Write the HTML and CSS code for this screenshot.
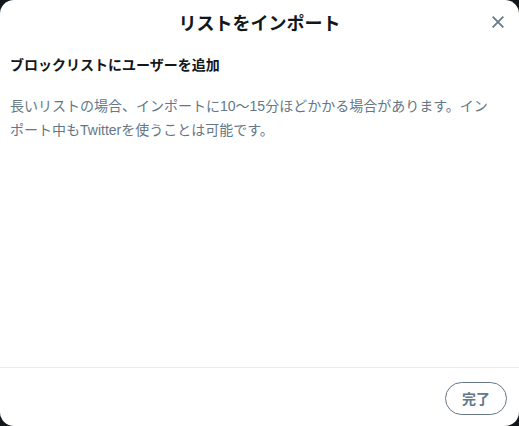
FILE: index.html
```html
<!DOCTYPE html>
<html lang="ja">
<head>
    <meta charset="UTF-8">
    <title>リストをインポート</title>
    <link rel="stylesheet" href="styles.css">
</head>
<body>
    <div class="dialog">
        <div class="dialog-header">
            <h1>リストをインポート</h1>
            <button class="close-button" aria-label="閉じる">
                <svg viewBox="0 0 24 24" width="16" height="16">
                    <path d="M4 4 L20 20 M20 4 L4 20" stroke="#657786" stroke-width="2.6" fill="none"/>
                </svg>
            </button>
        </div>
        <div class="dialog-body">
            <h2>ブロックリストにユーザーを追加</h2>
            <p>長いリストの場合、インポートに10〜15分ほどかかる場合があります。インポート中もTwitterを使うことは可能です。</p>
        </div>
        <div class="dialog-footer">
            <button class="done-button">完了</button>
        </div>
    </div>
</body>
</html>
```

FILE: styles.css
```css
html, body {
    margin: 0;
    height: 100%;
}
body {
    background-color: #14171a;
    font-family: "Liberation Sans", Arial, "Noto Sans CJK JP", sans-serif;
}
.dialog {
    height: 100%;
    box-sizing: border-box;
    background-color: #ffffff;
    border-radius: 14px;
    display: flex;
    flex-direction: column;
}
.dialog-header {
    position: relative;
    height: 42px;
    display: flex;
    align-items: center;
    justify-content: center;
}
.dialog-header h1 {
    margin: 0;
    font-size: 18px;
    font-weight: bold;
    color: #14171a;
    padding-top: 1px;
}
.close-button {
    position: absolute;
    right: 12px;
    top: 13px;
    width: 18px;
    height: 18px;
    padding: 0;
    border: none;
    background: none;
    display: flex;
    align-items: center;
    justify-content: center;
    cursor: pointer;
}
.dialog-body {
    flex: 1;
    padding: 12px 24px 0 10px;
}
.dialog-body h2 {
    margin: 0 0 18px 0;
    font-size: 14px;
    font-weight: bold;
    color: #14171a;
    line-height: 22px;
}
.dialog-body p {
    margin: 0;
    font-size: 14px;
    line-height: 24px;
    color: #657786;
}
.dialog-footer {
    border-top: 1px solid #e6ecf0;
    height: 58px;
    display: flex;
    align-items: center;
    justify-content: flex-end;
    padding-right: 12px;
}
.done-button {
    width: 62px;
    height: 33px;
    border: 1px solid #657786;
    border-radius: 17px;
    background-color: #ffffff;
    color: #657786;
    font-family: inherit;
    font-size: 14px;
    font-weight: bold;
    cursor: pointer;
    margin-top: 2px;
}
```
